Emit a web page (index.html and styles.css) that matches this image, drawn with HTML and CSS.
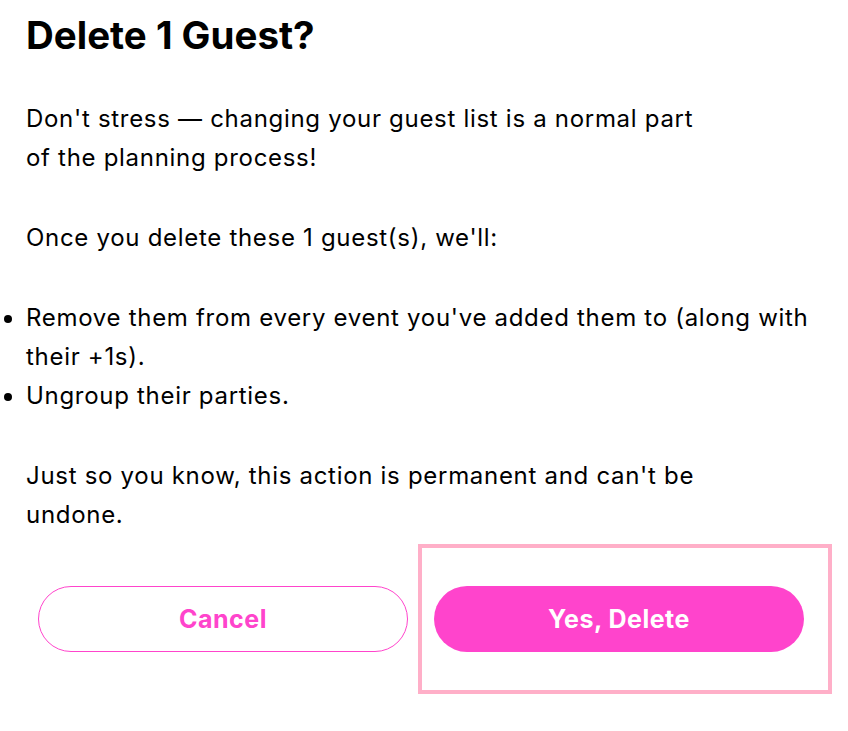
FILE: index.html
```html
<!DOCTYPE html>
<html>
<head>
  <title>Delete Guest</title>
  <link rel="stylesheet" href="styles.css">
</head>
<body>
  <div class="modal">
    <div class="modal-body">
      <h1>Delete 1 Guest?</h1>
      <p>Don't stress — changing your guest list is a normal part of the planning process!</p>
      <p>Once you delete these 1 guest(s), we'll:</p>
      <ul>
        <li>Remove them from every event you've added them to (along with their +1s).</li>
        <li>Ungroup their parties.</li>
      </ul>
      <p class="last">Just so you know, this action is permanent and can't be undone.</p>
    </div>
    <div class="modal-actions">
      <button class="btn btn-outline">Cancel</button>
      <div class="focus-ring">
        <button class="btn btn-primary">Yes, Delete</button>
      </div>
    </div>
  </div>
</body>
</html>
```

FILE: styles.css
```css
body {
  font-family: Inter, "Noto Sans", sans-serif;
  background-color: #fff;
  color: #000;
  margin: 0;
  padding: 0;
}
.modal-body {
  padding: 11px 0 0 26px;
}
h1 {
  font-size: 38.5px;
  font-weight: 700;
  margin: 0 0 40px;
  line-height: 48px;
}
p {
  font-size: 24px;
  line-height: 39px;
  letter-spacing: 0.7px;
  margin: 0 0 41px;
  max-width: 680px;
}
p.last {
  margin-bottom: 10px;
}
ul {
  font-size: 24px;
  line-height: 39px;
  letter-spacing: 0.7px;
  margin: 0 0 41px;
  padding: 0;
}
.modal-actions {
  display: flex;
  align-items: center;
  margin-left: 38px;
}
.btn {
  width: 370px;
  height: 66px;
  border-radius: 33px;
  font-family: inherit;
  font-size: 25px;
  font-weight: 700;
  letter-spacing: 0.5px;
  cursor: pointer;
}
.btn-outline {
  background: #fff;
  border: 1px solid #ff44cc;
  color: #ff44cc;
}
.btn-primary {
  background: #ff44cc;
  border: none;
  color: #fff;
}
.focus-ring {
  margin-left: 10px;
  border: 4px solid #ffafc8;
  padding: 38px 24px 38px 12px;
}
```
